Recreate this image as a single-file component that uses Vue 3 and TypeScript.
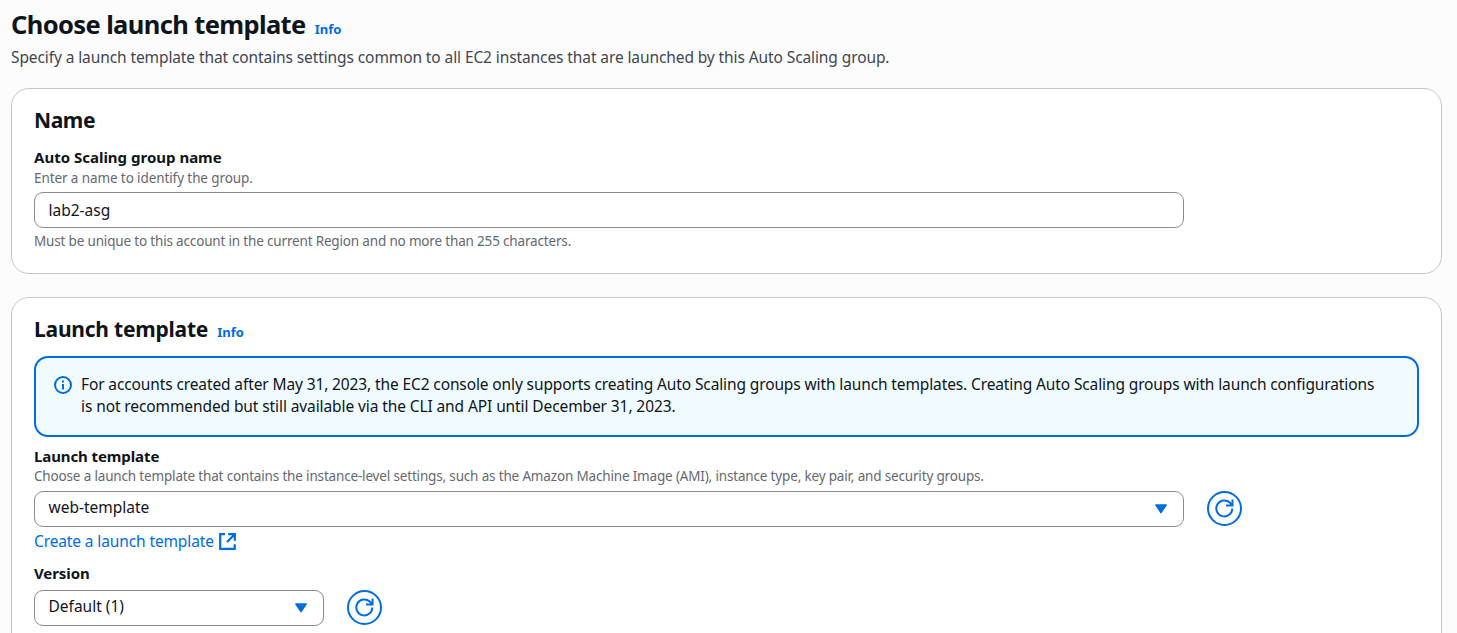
<script setup lang="ts">
import { ref } from 'vue'

const groupName = ref<string>('lab2-asg')
const template = ref<string>('web-template')
const version = ref<string>('Default (1)')
</script>

<template>
  <main class="page">
    <header class="page-header">
      <div class="title-row">
        <h1>Choose launch template</h1>
        <a class="info">Info</a>
      </div>
      <p class="lead">Specify a launch template that contains settings common to all EC2 instances that are launched by this Auto Scaling group.</p>
    </header>

    <section class="card name-card">
      <h2>Name</h2>
      <label class="label group-label">Auto Scaling group name</label>
      <p class="hint group-hint">Enter a name to identify the group.</p>
      <div class="control wide"><span class="value group-value">{{ groupName }}</span></div>
      <p class="hint constraint">Must be unique to this account in the current Region and no more than 255 characters.</p>
    </section>

    <section class="card template-card">
      <div class="title-row">
        <h2 class="template-title">Launch template</h2>
        <a class="info">Info</a>
      </div>
      <div class="alert">
        <svg class="alert-icon" width="18" height="18" viewBox="0 0 18 18" fill="none" stroke="#006ce0" stroke-width="2">
          <circle cx="9" cy="9" r="8" />
          <path d="M9 8v5.4M9 4.5v2.1" />
        </svg>
        <p>
          <span class="line first">For accounts created after May 31, 2023, the EC2 console only supports creating Auto Scaling groups with launch templates. Creating Auto Scaling groups with launch configurations</span>
          <span class="line second">is not recommended but still available via the CLI and API until December 31, 2023.</span>
        </p>
      </div>
      <label class="label template-label">Launch template</label>
      <p class="hint template-hint">Choose a launch template that contains the instance-level settings, such as the Amazon Machine Image (AMI), instance type, key pair, and security groups.</p>
      <div class="row">
        <div class="control select wide">
          <span class="value template-value">{{ template }}</span>
          <svg class="caret" width="12" height="10" viewBox="0 0 12 10"><path d="M.9 1h10.2L6 8.6z" fill="#006ce0" stroke="#006ce0" stroke-width="1.5" stroke-linejoin="round" /></svg>
        </div>
        <button class="refresh" aria-label="Refresh templates">
          <svg width="19" height="19" viewBox="0 0 19 19" fill="none" stroke="#006ce0" stroke-width="2">
            <path d="M17.3 9.5a8 8 0 1 1-2.5-5.9l2.2 2.2M17.5 .5v6h-6.5" />
          </svg>
        </button>
      </div>
      <a class="link">
        <span>Create a launch template</span>
        <svg width="17" height="17" viewBox="0 0 17 17" fill="none" stroke="#006ce0" stroke-width="2.2">
          <path d="M6 1.2H1.2v14.6h14.5v-4.6M9.2 1.2h6.6v6.6M15.8 1.2 8 9" />
        </svg>
      </a>
      <label class="label version-label">Version</label>
      <div class="row">
        <div class="control select narrow">
          <span class="value version-value">{{ version }}</span>
          <svg class="caret" width="12" height="10" viewBox="0 0 12 10"><path d="M.9 1h10.2L6 8.6z" fill="#006ce0" stroke="#006ce0" stroke-width="1.5" stroke-linejoin="round" /></svg>
        </div>
        <button class="refresh" aria-label="Refresh versions">
          <svg width="19" height="19" viewBox="0 0 19 19" fill="none" stroke="#006ce0" stroke-width="2">
            <path d="M17.3 9.5a8 8 0 1 1-2.5-5.9l2.2 2.2M17.5 .5v6h-6.5" />
          </svg>
        </button>
      </div>
    </section>
  </main>
</template>

<style>
body {
  margin: 0;
  background: #fcfcfd;
  overflow: hidden;
}
</style>

<style scoped>
.page {
  box-sizing: border-box;
  height: 633px;
  overflow: hidden;
  padding: 7px 15px 0 11px;
  background: #fcfcfd;
  color: #0f141a;
  font-family: "Noto Sans", "Open Sans", sans-serif;
  font-size: 15.5px;
  line-height: 22px;
  white-space: nowrap;
}
h1, h2, p { margin: 0; }
.title-row { display: flex; align-items: baseline; }
h1 { font-size: 25.5px; line-height: 34px; font-weight: 700; letter-spacing: -0.62px; }
h2 { font-size: 21px; line-height: 28px; font-weight: 700; letter-spacing: -0.4px; }
.template-title { letter-spacing: -0.22px; }
.info { margin-left: 9px; color: #006ce0; font-size: 13px; line-height: 18px; font-weight: 700; }
.lead { margin-top: 5px; color: #424650; letter-spacing: -0.1px; }
.card {
  box-sizing: border-box;
  padding: 17px 22px 0;
  border: 1px solid #c6c6cd;
  border-radius: 18px;
  background: #fff;
}
.name-card { height: 186px; margin-top: 20px; }
.template-card { height: 400px; margin-top: 23px; }
.label { display: block; font-size: 15px; line-height: 20px; font-weight: 700; letter-spacing: -0.1px; }
.group-label { margin-top: 13px; letter-spacing: 0; }
.hint { margin-top: 2px; color: #656871; font-size: 13.5px; line-height: 18px; letter-spacing: -0.165px; }
.group-hint { letter-spacing: -0.1px; }
.control {
  box-sizing: border-box;
  display: flex;
  align-items: center;
  height: 36px;
  padding: 0 16px 0 13.5px;
  border: 1px solid #8c8c94;
  border-radius: 9px;
  background: #fff;
}
.name-card .control { margin-top: 5px; }
.wide { width: 1150px; }
.narrow { width: 290px; }
.value { letter-spacing: 0; }
.select { justify-content: space-between; }
.select .value { margin-top: -4px; }
.constraint { margin-top: 4px; letter-spacing: -0.17px; }
.alert {
  box-sizing: border-box;
  display: flex;
  gap: 9px;
  height: 81px;
  margin-top: 13px;
  padding: 15px 18px;
  border: 2px solid #006ce0;
  border-radius: 14px;
  background: #f0fbff;
}
.alert-icon { flex: none; margin-top: 3px; }
.line { display: block; letter-spacing: -0.12px; }
.second { letter-spacing: -0.1px; }
.template-label { margin-top: 9px; }
.template-hint { margin-top: 1px; }
.row { display: flex; gap: 23px; margin-top: 6px; }
.refresh {
  box-sizing: border-box;
  display: grid;
  place-items: center;
  width: 35px;
  height: 35px;
  padding: 0;
  border: 2px solid #006ce0;
  border-radius: 50%;
  background: #fff;
}
.link { display: flex; align-items: center; gap: 5px; margin-top: 3px; color: #006ce0; letter-spacing: -0.12px; }
.version-label { margin-top: 11px; }
.version-label + .row { margin-top: 7px; }
</style>
